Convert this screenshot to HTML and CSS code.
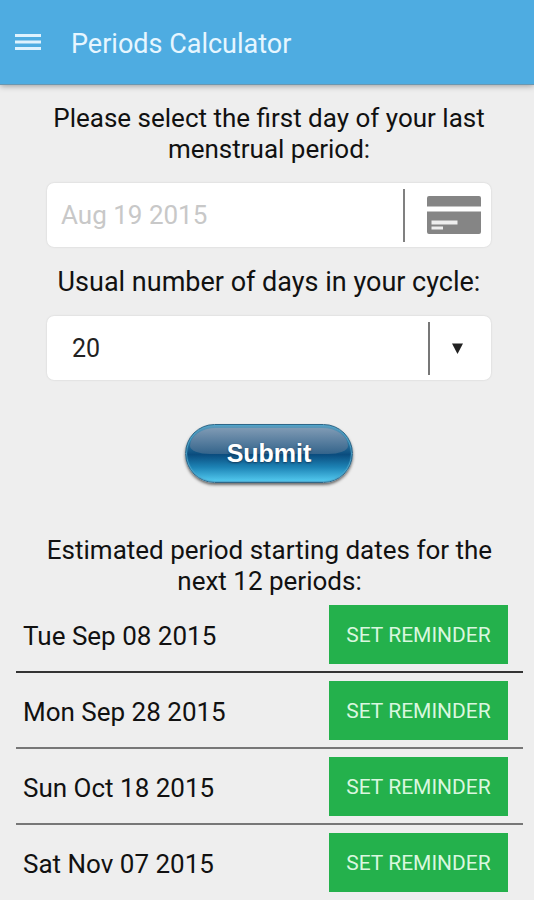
FILE: index.html
```html
<!DOCTYPE html>
<html lang="en">
<head>
<meta charset="utf-8">
<meta name="viewport" content="width=device-width, initial-scale=1">
<title>Periods Calculator</title>
<link rel="stylesheet" href="styles.css">
</head>
<body>
<header class="app-bar">
  <button class="menu-button" type="button" aria-label="Menu">
    <svg width="26" height="18" viewBox="0 0 26 18" aria-hidden="true"><path d="M0 2.500h26M0 9h26M0 15.500h26" stroke="#def2fe" stroke-width="2.800"/></svg>
  </button>
  <h1 class="app-title">Periods Calculator</h1>
</header>
<main class="content">
  <form class="calculator">
    <label class="prompt" for="start-date">Please select the first day of your last menstrual period:</label>
    <div class="field">
      <input class="date-input" id="start-date" type="text" value="Aug 19 2015">
      <span class="divider divider-date"></span>
      <button class="date-button" type="button" aria-label="Pick a date">
        <svg width="54" height="38" viewBox="0 0 54 38" aria-hidden="true">
          <path fill="#858585" d="M2 0h50q2 0 2 2v8.500H0V2q0-2 2-2zM0 15.500h54V36q0 2-2 2H2q-2 0-2-2z"/>
          <path fill="#eee" d="M4.500 24.500h26v4h-26zM4.500 30.500h11.500v3H4.500z"/>
        </svg>
      </button>
    </div>
    <label class="prompt prompt-cycle" for="cycle">Usual number of days in your cycle:</label>
    <div class="field">
      <select class="cycle-select" id="cycle"><option>20</option></select>
      <span class="divider divider-cycle"></span>
      <svg class="arrow" width="11" height="11" viewBox="0 0 11 11" aria-hidden="true"><path d="M0 0.500h11L5.500 11z" fill="#222"/></svg>
    </div>
    <button class="submit" type="button"><span class="submit-text">Submit</span></button>
  </form>
  <section>
    <h2 class="prompt prompt-dates">Estimated period starting dates for the next 12 periods:</h2>
    <ul class="dates">
      <li class="date-row"><span class="date">Tue Sep 08 2015</span><button class="reminder" type="button">SET REMINDER</button></li>
      <li class="date-row"><span class="date">Mon Sep 28 2015</span><button class="reminder" type="button">SET REMINDER</button></li>
      <li class="date-row"><span class="date">Sun Oct 18 2015</span><button class="reminder" type="button">SET REMINDER</button></li>
      <li class="date-row"><span class="date">Sat Nov 07 2015</span><button class="reminder" type="button">SET REMINDER</button></li>
    </ul>
  </section>
</main>
</body>
</html>
```
FILE: styles.css
```css
* { box-sizing: border-box; }

body {
  margin: 0;
  background: #eee;
  color: #111;
  font-family: Roboto, sans-serif;
  font-size: 26px;
  line-height: 31px;
}

button, input, select {
  margin: 0;
  padding: 0;
  border: 0;
  background: none;
  font-family: inherit;
}

svg { display: block; }

.app-bar {
  display: flex;
  align-items: center;
  gap: 30px;
  height: 85px;
  padding: 0 15px;
  background: #4eace1;
  border-bottom: 1px solid #6b97b0;
  box-shadow: 0 1px 6px rgba(0, 0, 0, 0.35);
}

.app-title {
  margin: 4px 0 0;
  color: #e6f6ff;
  font-size: 27px;
  font-weight: 400;
}

.content { padding: 18px 11px 0 16px; }

.calculator {
  display: flex;
  flex-direction: column;
  padding: 0 32px 0 31px;
}

.prompt {
  margin: 0;
  font-size: 26px;
  font-weight: 400;
  text-align: center;
}

.prompt-cycle {
  margin-top: 20px;
  font-size: 27px;
}

.prompt-dates { padding: 0 20px; }

.field {
  position: relative;
  display: flex;
  align-items: center;
  height: 64px;
  margin-top: 18px;
  background: #fff;
  border-radius: 7px;
  box-shadow: 0 0 2px rgba(0, 0, 0, 0.15);
}

.date-input {
  flex: 1;
  min-width: 0;
  padding-left: 14px;
  color: #c8c8c8;
  font-size: 26px;
}

.divider {
  width: 2px;
  height: 53px;
}

.divider-date { background: #808080; }
.divider-cycle { background: #777; }

.date-button { padding: 0 10px 0 22px; }

.cycle-select {
  flex: 1;
  height: 64px;
  padding-left: 25px;
  appearance: none;
  color: #222;
  font-size: 25px;
}

.arrow { margin: 0 28px 0 22px; }

.submit {
  position: relative;
  align-self: center;
  width: 168px;
  height: 59px;
  margin: 44px 0 52px;
  border: 1px solid #2f6687;
  border-radius: 30px;
  background: linear-gradient(#5f9cbd 0%, #2d769f 30%, #0a4c7e 52%, #1d83b5 74%, #55cdf2 100%);
  box-shadow: inset 0 0 1px 1px #4ea6cb, 0 2px 3px rgba(0, 0, 0, 0.55);
  color: #fff;
  font-family: "Liberation Sans", sans-serif;
  font-size: 25px;
  font-weight: 700;
}

.submit::before {
  content: "";
  position: absolute;
  top: 3px;
  left: 4px;
  right: 4px;
  height: 26px;
  border-radius: 26px 26px 20px 20px / 18px 18px 8px 8px;
  background: linear-gradient(#7f9ab4, #34648b);
}

.submit-text {
  position: relative;
  text-shadow: 0 1px 2px #153c5c;
}

.dates {
  margin: 0;
  padding: 0;
  list-style: none;
}

.date-row {
  display: flex;
  align-items: center;
  justify-content: space-between;
  padding: 8px 15px 7px 7px;
  border-bottom: 2px solid #777;
}

.date-row:first-child { border-color: #333; }
.date-row:last-child { border: 0; }

.date { padding-top: 4px; }

.reminder {
  width: 179px;
  height: 59px;
  background: #24b14c;
  color: #d9f7df;
  font-size: 21px;
}
```
